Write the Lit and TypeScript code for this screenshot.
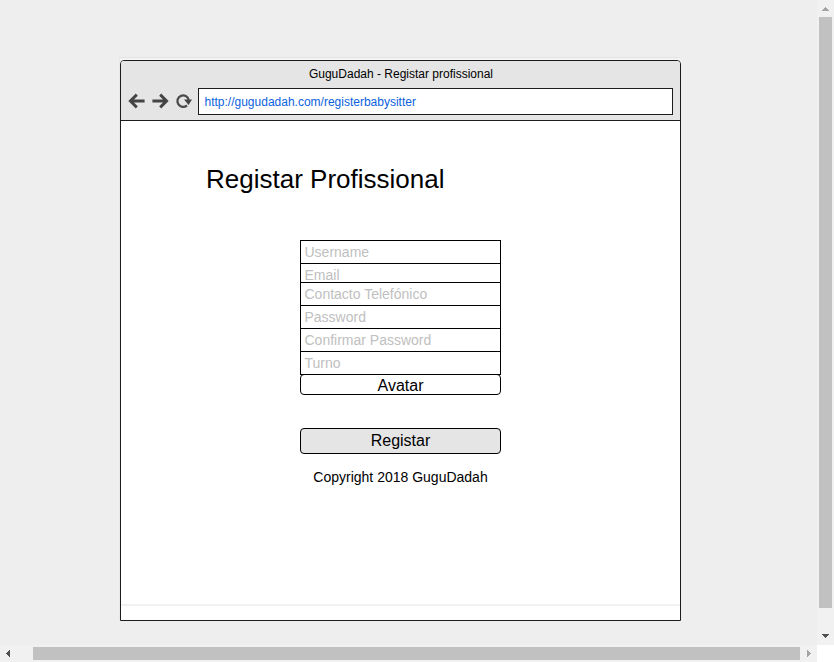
import { LitElement, html, css, svg } from "lit";
import { customElement, property } from "lit/decorators.js";
import { classMap } from "lit/directives/class-map.js";

@customElement("scroll-track")
class ScrollTrack extends LitElement {
  @property({ type: Boolean, reflect: true }) horizontal = false;

  static styles = css`
    :host {
      display: flex;
      flex-direction: column;
      background: #f1f1f1;
      box-sizing: border-box;
      padding: 0 2px;
    }
    :host([horizontal]) {
      flex-direction: row;
      padding: 2px 0;
    }
    svg { display: block; flex: none; }
    .v svg { margin-left: -2px; }
    .h svg { margin-top: -2px; }
    .track { display: flex; flex: 1; }
    .v { flex-direction: column; }
    .h { flex-direction: row; }
    .thumb { flex: 1; background: #c1c1c1; }
    .v .thumb { margin-bottom: 20px; }
    .h .thumb { margin-left: 16px; }
  `;

  private arrow(points: string, fill: string) {
    return html`<svg width="17" height="17" shape-rendering="crispEdges">
      ${svg`<polygon points=${points} fill=${fill}></polygon>`}
    </svg>`;
  }

  render() {
    return this.horizontal
      ? html`<div class="track h">
          ${this.arrow("6,8.5 10,4.5 10,12.5", "#505050")}
          <div class="thumb"></div>
          ${this.arrow("7,4.5 11,8.5 7,12.5", "#a3a3a3")}
        </div>`
      : html`<div class="track v">
          ${this.arrow("4.5,11 8.5,7 12.5,11", "#a3a3a3")}
          <div class="thumb"></div>
          ${this.arrow("4.5,6 12.5,6 8.5,10", "#505050")}
        </div>`;
  }
}

@customElement("app-root")
class AppRoot extends LitElement {
  private fields = [
    { label: "Username" },
    { label: "Email", short: true },
    { label: "Contacto Telefónico" },
    { label: "Password" },
    { label: "Confirmar Password" },
    { label: "Turno", last: true },
  ];

  static styles = css`
    :host {
      display: grid;
      grid-template-columns: 817px 17px;
      grid-template-rows: 645px 17px;
      width: 834px;
      height: 662px;
      overflow: hidden;
      background: #fff;
      color: #000;
      font-family: "Liberation Sans", Arial, sans-serif;
    }
    * { box-sizing: border-box; }
    .canvas { background: #eeeeee; padding: 57px 0 0 119px; }
    .frame {
      width: 562px;
      height: 564px;
      border-top: 1px solid #e4e4e4;
      border-left: 1px solid #e8e8e8;
      padding-top: 2px;
      background: #f3f3f3;
    }
    .window {
      width: 561px;
      height: 561px;
      border: 1px solid #1c1c1f;
      border-radius: 4px 4px 0 0;
      background: #fff;
      display: flex;
      flex-direction: column;
    }
    .bar {
      height: 60px;
      flex: none;
      background: #e5e5e5;
      border-bottom: 1px solid #1c1c1f;
      border-radius: 3px 3px 0 0;
    }
    .title {
      height: 27px;
      line-height: 26px;
      font-size: 12px;
      text-align: center;
      white-space: pre;
      padding-left: 1px;
    }
    .nav { display: flex; height: 27px; padding-right: 7px; }
    .nav svg { display: block; flex: none; }
    .url {
      flex: 1;
      border: 1px solid #1c1c1f;
      background: #fff;
      color: #0b62de;
      font-size: 12px;
      line-height: 26px;
      padding-left: 5.5px;
    }
    .body {
      flex: 1;
      display: flex;
      flex-direction: column;
      align-items: center;
    }
    h1 {
      align-self: flex-start;
      margin: 42px 0 0 85px;
      font-size: 26px;
      font-weight: 400;
      line-height: 32px;
      height: 77px;
    }
    .form { width: 201px; display: flex; flex-direction: column; }
    .field {
      height: 23px;
      border: 1px solid #000;
      border-bottom: 0;
      padding-left: 3.5px;
      font-size: 14px;
      line-height: 22px;
      color: #c0c0c0;
      overflow: hidden;
    }
    .short { height: 19px; }
    .last { height: 24px; border-bottom: 1px solid #000; }
    .button {
      border: 1px solid #000;
      border-radius: 4px;
      text-align: center;
      font-size: 16px;
    }
    .avatar { height: 21px; line-height: 21px; margin-top: -1px; }
    .submit { height: 26px; line-height: 23px; margin-top: 33px; background: #e5e5e5; }
    .copy { margin-top: 15px; font-size: 14px; line-height: 16px; text-align: center; }
    .rule { margin-top: auto; width: 100%; height: 2px; background: #f1f1f1; margin-bottom: 14px; }
  `;

  render() {
    return html`
      <div class="canvas">
        <div class="frame">
          <div class="window">
            <div class="bar">
              <div class="title">GuguDadah - Registar profissional</div>
              <div class="nav">
                <svg width="77" height="27" viewBox="121 88 77 27" fill="none" stroke="#444" stroke-width="2.9">
                  <path d="M144.6 101H130.5M136.8 94.6L130.4 101L136.8 107.4"></path>
                  <path d="M152.4 101H166.5M160.2 94.6L166.6 101L160.2 107.4"></path>
                  <path d="M187 105.3A5.7 5.7 0 1 1 188.7 100" stroke="#4c4c4c" stroke-width="2.3"></path>
                  <path d="M184 99.6L192 99.6L188.6 105Z" fill="#444" stroke="none"></path>
                </svg>
                <div class="url">http://gugudadah.com/registerbabysitter</div>
              </div>
            </div>
            <div class="body">
              <h1>Registar Profissional</h1>
              <div class="form">
                ${this.fields.map(
                  (f) => html`<div class=${classMap({ field: true, short: !!f.short, last: !!f.last })}>${f.label}</div>`
                )}
                <div class="button avatar">Avatar</div>
                <div class="button submit">Registar</div>
                <div class="copy">Copyright 2018 GuguDadah</div>
              </div>
              <div class="rule"></div>
            </div>
          </div>
        </div>
      </div>
      <scroll-track></scroll-track>
      <scroll-track horizontal></scroll-track>
    `;
  }
}
